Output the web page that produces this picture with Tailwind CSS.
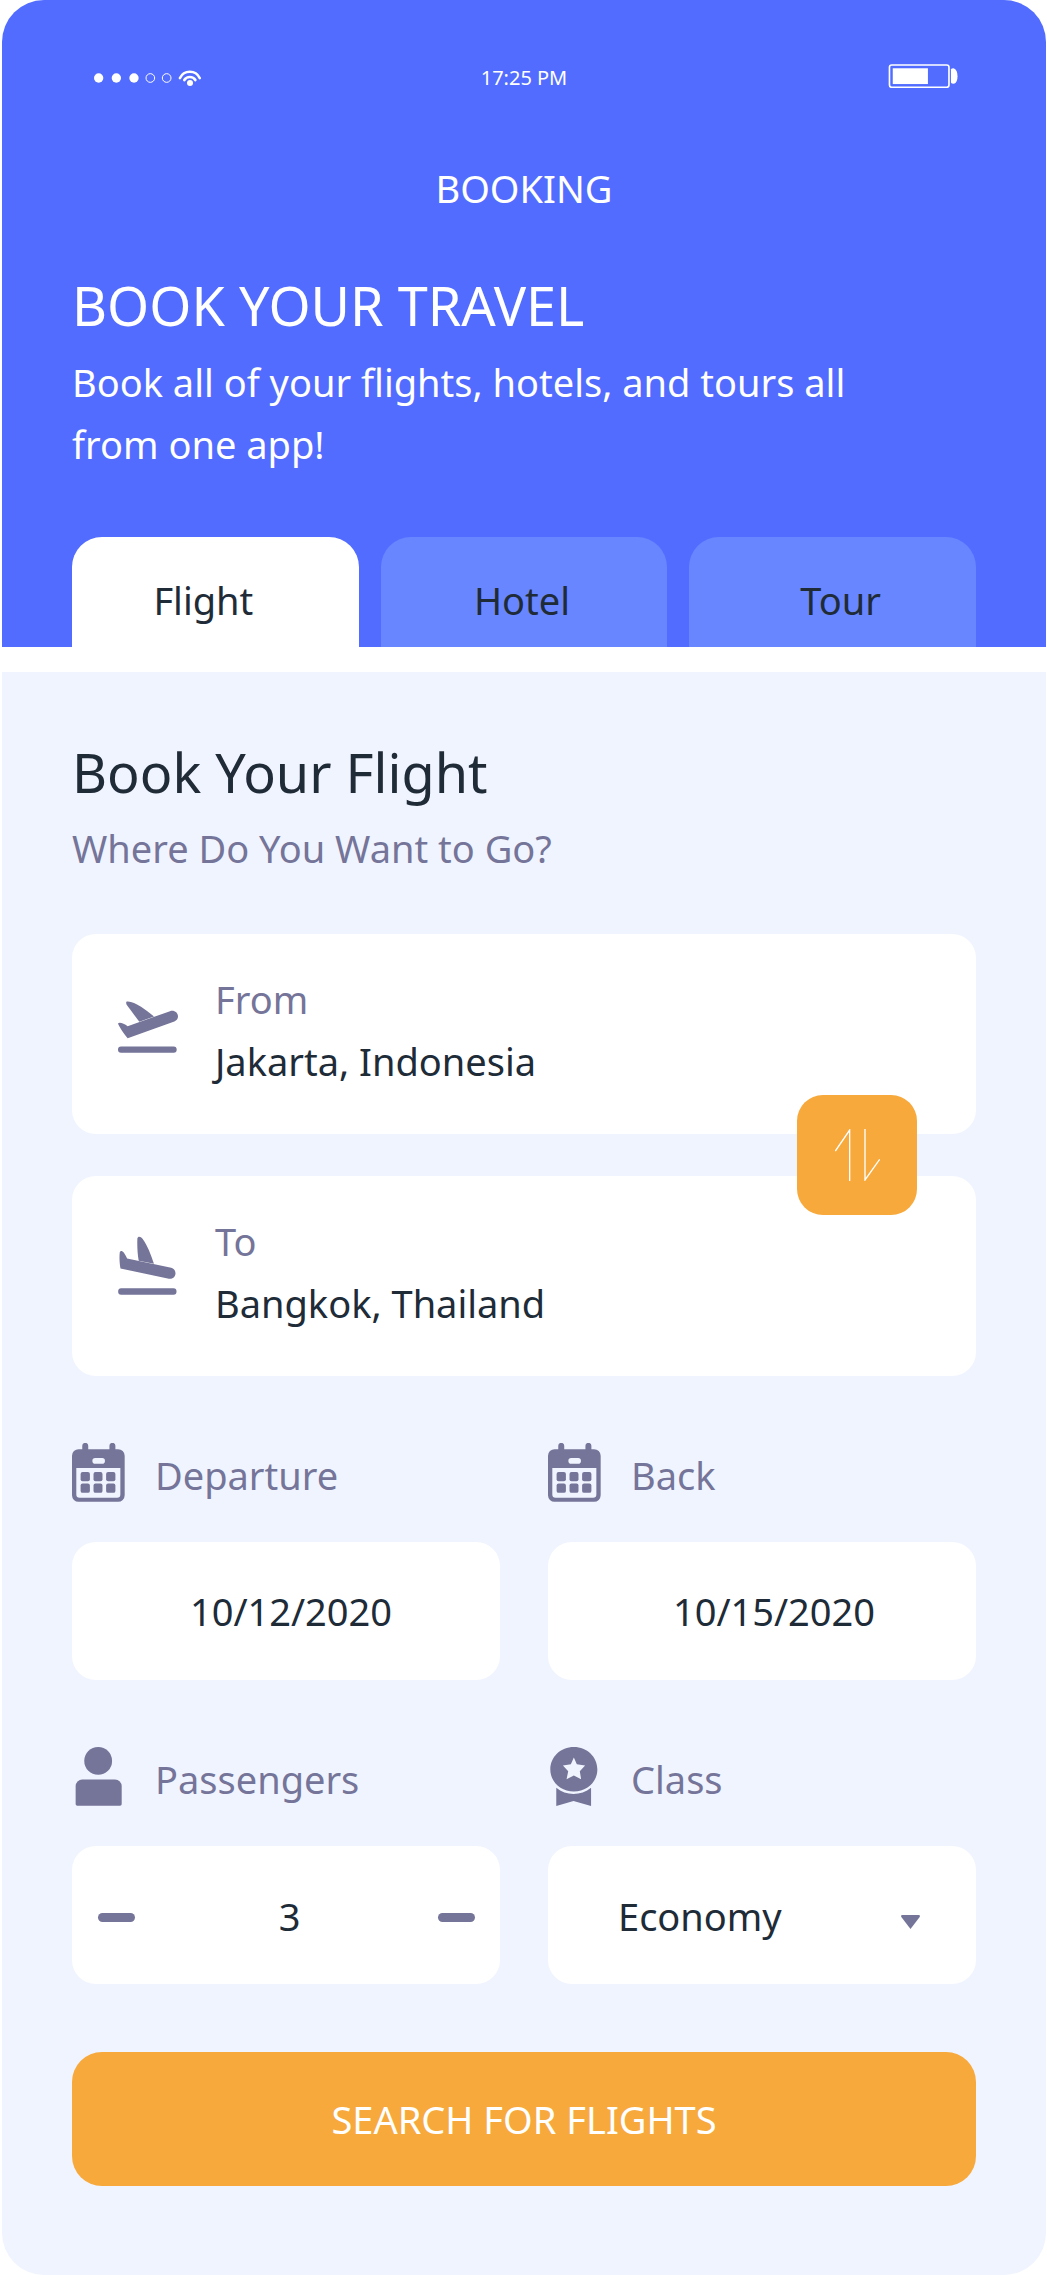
<!DOCTYPE html>
<html lang="en">
<head>
<meta charset="utf-8">
<meta name="viewport" content="width=device-width, initial-scale=1">
<title>Booking</title>
<script src="https://cdn.jsdelivr.net/npm/@tailwindcss/browser@4"></script>
</head>
<body class="bg-white pl-[2px] pr-px font-['Noto_Sans',sans-serif] text-[38px] leading-[62px] text-[#202b38]">
<header class="rounded-t-[42px] bg-[#516cff] pt-[62px] text-white">
  <div class="grid h-8 grid-cols-3 items-center px-[88px]">
    <svg class="ml-1 h-4 w-[107px]" viewBox="283 209 321 48" fill="#fff" role="img" aria-label="Signal">
      <circle cx="297" cy="233" r="14"/><circle cx="350" cy="233" r="14"/><circle cx="403" cy="233" r="14"/>
      <g fill="none" stroke="#fff" stroke-width="3"><circle cx="452" cy="233" r="13"/><circle cx="501" cy="233" r="13"/></g>
      <g fill="none" stroke="#fff" stroke-width="8" stroke-linecap="round"><path d="M541 233C553 208 588 208 600 233"/><path d="M554 239C561 227 580 227 587 239"/></g>
      <circle cx="571" cy="248" r="9"/>
    </svg>
    <time class="text-center text-[20px] leading-6">17:25 PM</time>
    <svg class="mb-1 h-6 w-[70px] justify-self-end" viewBox="1092 191 210 73" fill="#fff" role="img" aria-label="Battery">
      <rect x="1095" y="194" width="181" height="68" rx="7" fill="none" stroke="#fff" stroke-width="5"/>
      <rect x="1105" y="204" width="107" height="48"/>
      <path d="M1282 208Q1283 204 1290 204Q1302 208 1302 228Q1302 248 1291 251Q1283 251 1282 247Z"/>
    </svg>
  </div>
  <p class="mt-[63px] text-center">BOOKING</p>
  <div class="px-[70px]">
    <h1 class="mt-14 text-[54px] leading-[60px]">BOOK YOUR TRAVEL</h1>
    <p class="mt-4 max-w-[800px]">Book all of your flights, hotels, and tours all from one app!</p>
    <nav class="mt-[62px] grid grid-cols-3 gap-[22px] text-[#202b38]" role="tablist">
      <button type="button" role="tab" aria-selected="true" class="h-[110px] rounded-t-[30px] bg-white pt-4 pr-6">Flight</button>
      <button type="button" role="tab" aria-selected="false" class="h-[110px] rounded-t-[30px] bg-[#6886ff] pt-4 pr-1">Hotel</button>
      <button type="button" role="tab" aria-selected="false" class="h-[110px] rounded-t-[30px] bg-[#6886ff] pt-4 pl-4">Tour</button>
    </nav>
  </div>
</header>
<main class="mt-[25px] rounded-b-[42px] bg-[#f0f4ff] px-[70px] pt-[70px] pb-[89px]">
  <h2 class="text-[54px] leading-[60px]">Book Your Flight</h2>
  <p class="mt-[15px] text-[#757499]">Where Do You Want to Go?</p>
  <form class="mt-[55px]">
    <div class="relative flex flex-col gap-[42px]">
      <div class="flex h-[200px] rounded-3xl bg-white px-[46px] py-[34px]">
        <svg class="mt-8 h-[53px] w-[60px] shrink-0" viewBox="204 838 180 158" fill="#757499" aria-hidden="true">
          <path d="M230 842C250 838 290 868 312 887L268 903L230 852Q227 845 230 842Z"/>
          <path d="M233 916L360 871C372 867 384 875 384 887C384 893 380 899 373 902L233 952C220 938 208 918 204 908C208 903 222 908 233 916Z"/>
          <rect x="204" y="977" width="176" height="19" rx="9"/>
        </svg>
        <div class="flex min-w-0 grow flex-col pl-[25px]">
          <label for="from" class="pl-3 text-[#757499]">From</label>
          <input id="from" type="text" value="Jakarta, Indonesia" class="block h-[62px] w-full max-w-[500px] bg-transparent indent-3 outline-none">
        </div>
      </div>
      <div class="flex h-[200px] rounded-3xl bg-white px-[46px] py-[34px]">
        <svg class="mt-[26px] h-[59px] w-[60px] shrink-0" viewBox="204 528 180 178" fill="#757499" aria-hidden="true">
          <path d="M262 535C264 527 272 529 278 537C292 555 303 585 312 612L266 603C262 580 261 555 262 535Z"/>
          <path d="M209 576C213 569 222 574 231 596L364 624C374 627 377 634 377 641C376 652 367 659 357 657L211 626C208 610 207 590 209 576Z"/>
          <rect x="204" y="686" width="176" height="19" rx="9"/>
        </svg>
        <div class="flex min-w-0 grow flex-col pl-[25px]">
          <label for="to" class="pl-3 text-[#757499]">To</label>
          <input id="to" type="text" value="Bangkok, Thailand" class="block h-[62px] w-full max-w-[500px] bg-transparent indent-3 outline-none">
        </div>
      </div>
      <button type="button" aria-label="Swap cities" class="absolute top-1/2 right-[59px] flex size-[120px] -translate-y-1/2 items-center justify-center rounded-[26px] bg-[#f7a93c]">
        <svg class="h-[52px] w-[45px]" viewBox="402 626 135 156" fill="none" stroke="#fff" stroke-width="4" aria-hidden="true">
          <path d="M403 692L446 629V782"/><path d="M492 626V779L536 717"/>
        </svg>
      </button>
    </div>
    <div class="mt-[68px] grid grid-cols-2 gap-x-12 gap-y-[68px]">
      <div>
        <div class="flex h-[62px] items-center gap-[30px] text-[#757499]">
          <svg class="mb-1.5 h-[59px] w-[53px]" viewBox="65 69 160 177" fill="currentColor" aria-hidden="true">
            <path fill-rule="evenodd" d="M96 87V77a9 9 0 0 1 18 0V87H178V77a9 9 0 0 1 18 0V87H204a20 20 0 0 1 20 20V226a20 20 0 0 1-20 20H85a20 20 0 0 1-20-20V107a20 20 0 0 1 20-20ZM78 144V224a10 10 0 0 0 10 10H201a10 10 0 0 0 10-10V144ZM135 114a8 8 0 0 0 0 17H156a8 8 0 0 0 0-17Z"/>
            <rect x="91" y="156" width="28" height="28" rx="6"/><rect x="130" y="156" width="27" height="28" rx="6"/><rect x="168" y="156" width="28" height="28" rx="6"/>
            <rect x="91" y="191" width="28" height="28" rx="6"/><rect x="130" y="191" width="27" height="28" rx="6"/><rect x="168" y="191" width="28" height="28" rx="6"/>
          </svg>
          <label for="departure">Departure</label>
        </div>
        <input id="departure" type="text" value="10/12/2020" class="mt-9 block h-[138px] w-full rounded-3xl bg-white pl-2.5 text-center outline-none">
      </div>
      <div>
        <div class="flex h-[62px] items-center gap-[30px] text-[#757499]">
          <svg class="mb-1.5 h-[59px] w-[53px]" viewBox="65 69 160 177" fill="currentColor" aria-hidden="true">
            <path fill-rule="evenodd" d="M96 87V77a9 9 0 0 1 18 0V87H178V77a9 9 0 0 1 18 0V87H204a20 20 0 0 1 20 20V226a20 20 0 0 1-20 20H85a20 20 0 0 1-20-20V107a20 20 0 0 1 20-20ZM78 144V224a10 10 0 0 0 10 10H201a10 10 0 0 0 10-10V144ZM135 114a8 8 0 0 0 0 17H156a8 8 0 0 0 0-17Z"/>
            <rect x="91" y="156" width="28" height="28" rx="6"/><rect x="130" y="156" width="27" height="28" rx="6"/><rect x="168" y="156" width="28" height="28" rx="6"/>
            <rect x="91" y="191" width="28" height="28" rx="6"/><rect x="130" y="191" width="27" height="28" rx="6"/><rect x="168" y="191" width="28" height="28" rx="6"/>
          </svg>
          <label for="back">Back</label>
        </div>
        <input id="back" type="text" value="10/15/2020" class="mt-9 block h-[138px] w-full rounded-3xl bg-white pl-6 text-center outline-none">
      </div>
      <div>
        <div class="flex h-[62px] items-center gap-[30px] text-[#757499]">
          <svg class="mb-1.5 h-[59px] w-[53px]" viewBox="65 80 160 178" fill="currentColor" aria-hidden="true">
            <circle cx="144" cy="122" r="42"/>
            <path d="M76 198a20 20 0 0 1 20-20H195a20 20 0 0 1 20 20V252a5 5 0 0 1-5 5H81a5 5 0 0 1-5-5Z"/>
          </svg>
          <label for="passengers">Passengers</label>
        </div>
        <div class="mt-9 flex h-[138px] items-center justify-between rounded-3xl bg-white pr-[25px] pl-[26px]">
          <button type="button" aria-label="Fewer passengers" class="flex h-12 items-center"><span class="mt-1 h-[9px] w-[37px] rounded-full bg-[#757499]"></span></button>
          <input id="passengers" type="text" inputmode="numeric" value="3" class="h-[62px] w-32 bg-transparent pt-0.5 pl-1.5 text-center outline-none">
          <button type="button" aria-label="More passengers" class="flex h-12 items-center"><span class="mt-1 h-[9px] w-[37px] rounded-full bg-[#757499]"></span></button>
        </div>
      </div>
      <div>
        <div class="flex h-[62px] items-center gap-[30px] text-[#757499]">
          <svg class="mb-1.5 h-[59px] w-[53px]" viewBox="56 78 160 178" fill="currentColor" aria-hidden="true">
            <path fill-rule="evenodd" d="M134 78C174 78 205 108 205 146C205 183 174 212 134 212C94 212 63 183 63 146C63 108 94 78 134 78ZM134 110L125 130L101 134L117 151L112 175L134 164L156 175L152 151L168 134L143 130Z"/>
            <path d="M81 201C110 226 156 226 186 201V256L133 241L81 256Z"/>
          </svg>
          <label for="class">Class</label>
        </div>
        <div class="relative mt-9">
          <select id="class" class="block h-[138px] w-full appearance-none rounded-3xl bg-white pt-0.5 pl-[70px] outline-none">
            <option>Economy</option>
            <option>Business</option>
          </select>
          <svg class="pointer-events-none absolute top-[69px] right-14 h-[14px] w-[19px]" viewBox="1113 585 58 42" fill="#757499" aria-hidden="true"><path d="M1116 585H1168Q1172 586 1170 591L1142 627L1114 591Q1112 586 1116 585Z"/></svg>
        </div>
      </div>
    </div>
    <button type="submit" class="mt-[68px] block h-[134px] w-full rounded-[30px] bg-[#f7a93c] text-white">SEARCH FOR FLIGHTS</button>
  </form>
</main>
</body>
</html>
